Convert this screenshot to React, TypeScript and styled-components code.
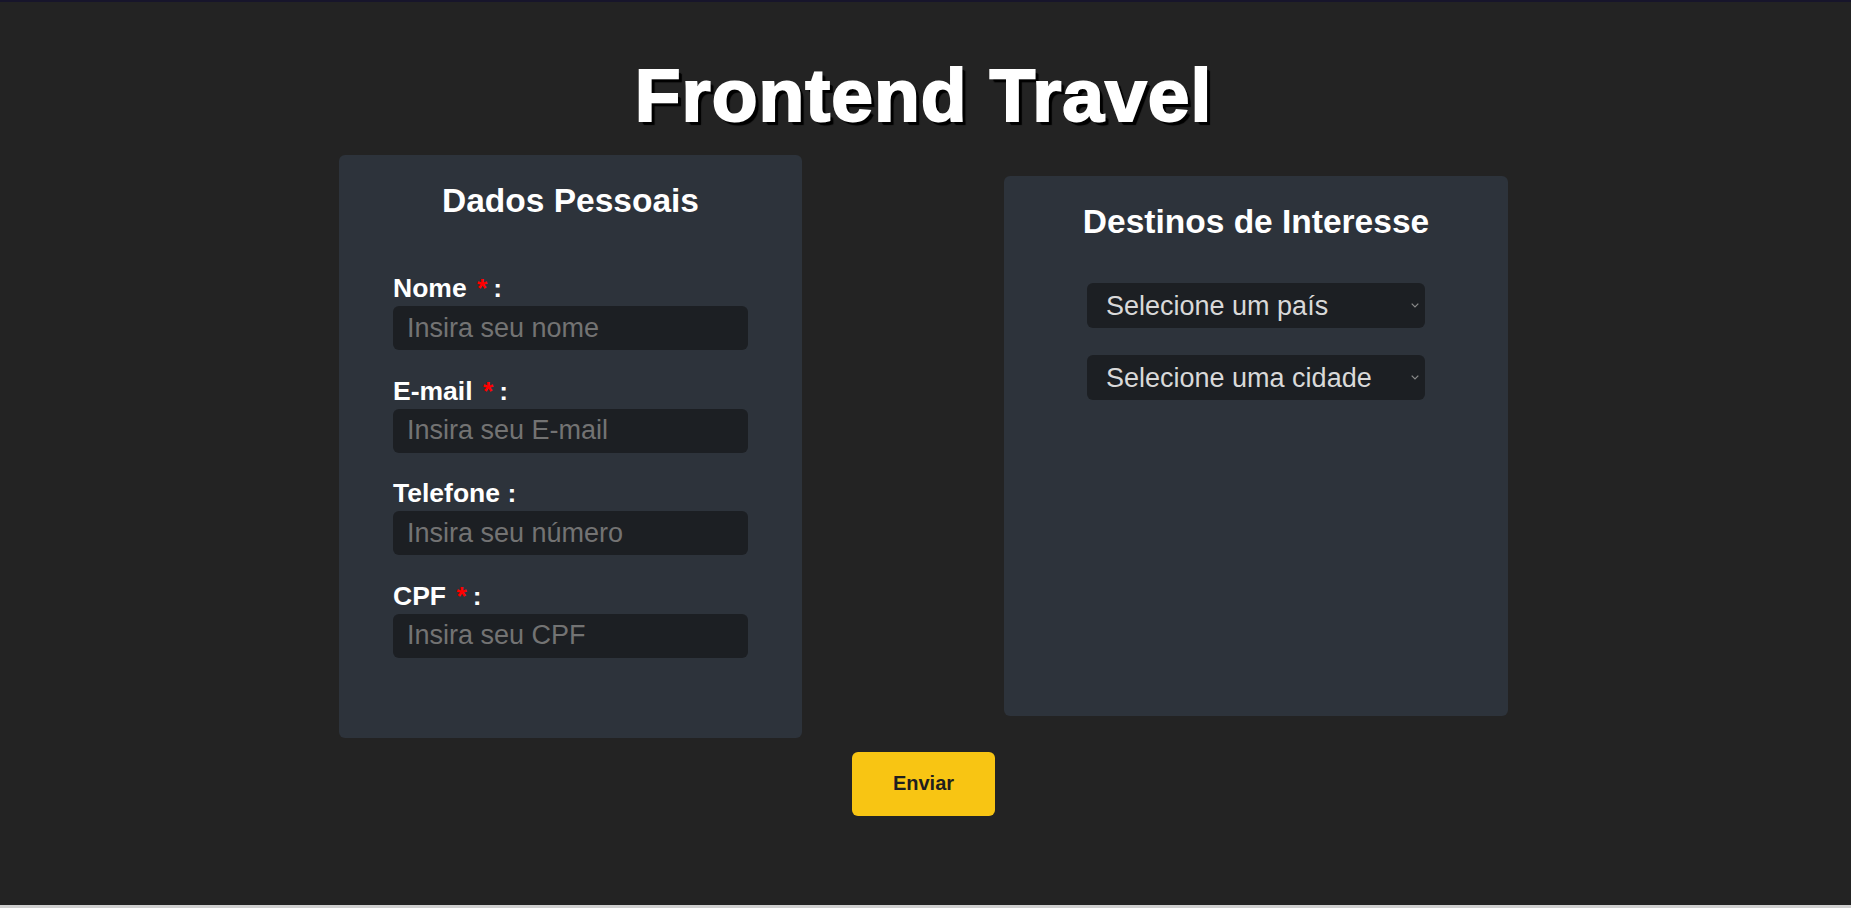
import React from "react";
import styled, { createGlobalStyle } from "styled-components";

const GlobalStyle = createGlobalStyle`
  html, body {
    margin: 0;
    padding: 0;
    background: #cfcfcf;
  }
  body {
    font-family: "Liberation Sans", Arial, Helvetica, sans-serif;
  }
  *, *::before, *::after {
    box-sizing: border-box;
  }
`;

const Page = styled.main`
  height: 905px;
  background: #232323;
  border-top: 2px solid #17152b;
  padding: 50px 4px 0 0;
  display: flex;
  flex-direction: column;
  align-items: center;
`;

const Title = styled.h1`
  margin: 0 0 17px;
  font-size: 75px;
  line-height: 86px;
  font-weight: 700;
  letter-spacing: 1px;
  color: #ffffff;
  -webkit-text-stroke: 2px #ffffff;
  text-shadow: 3px 3px 1px #000000, 4px 4px 1px #000000;
`;

const Row = styled.div`
  display: flex;
  align-items: center;
  gap: 202px;
`;

const Card = styled.section`
  background: #2d333b;
  border-radius: 6px;
  display: flex;
  flex-direction: column;
`;

const PersonalCard = styled(Card)`
  width: 463px;
  padding: 27px 54px 80px;
`;

const DestinationCard = styled(Card)`
  width: 504px;
  padding: 27px 0 316px;
  align-items: center;
`;

const CardTitle = styled.h2`
  margin: 0;
  font-size: 33.5px;
  line-height: 38px;
  font-weight: 700;
  color: #ffffff;
  text-align: center;
`;

const Fields = styled.div`
  margin-top: 53px;
  display: flex;
  flex-direction: column;
  gap: 25.5px;
`;

const Field = styled.div`
  display: flex;
  flex-direction: column;
  gap: 3px;
`;

const Label = styled.label`
  font-size: 26.5px;
  line-height: 30px;
  font-weight: 700;
  color: #ffffff;
`;

const Required = styled.span`
  color: #ff0000;
  margin: 0 6px 0 3px;
`;

const Input = styled.input`
  height: 44px;
  width: 100%;
  border: none;
  border-radius: 6px;
  background: #1c1f23;
  padding: 0 14px;
  font-family: inherit;
  font-size: 27px;
  color: #dddddd;
  outline: none;

  &::placeholder {
    color: #737373;
  }
`;

const Selects = styled.div`
  margin-top: 42px;
  width: 338px;
  display: flex;
  flex-direction: column;
  gap: 27px;
`;

const SelectWrap = styled.div`
  position: relative;
`;

const Select = styled.select`
  appearance: none;
  -webkit-appearance: none;
  width: 100%;
  height: 45px;
  border: none;
  border-radius: 6px;
  background: #1c1f23;
  color: #d9d9d9;
  padding: 0 19px;
  font-family: inherit;
  font-size: 27px;
  outline: none;
`;

const Chevron = styled.svg`
  position: absolute;
  right: 6px;
  top: 20px;
  width: 8px;
  height: 5px;
  pointer-events: none;
`;

const SubmitButton = styled.button`
  margin-top: 14px;
  width: 143px;
  height: 64px;
  border: none;
  border-radius: 6px;
  background: #f8c513;
  color: #1f1f1f;
  font-family: inherit;
  font-size: 20px;
  font-weight: 700;
  cursor: pointer;
`;

type FieldDef = { label: string; placeholder: string; required: boolean; type: string };

const fields: FieldDef[] = [
  { label: "Nome", placeholder: "Insira seu nome", required: true, type: "text" },
  { label: "E-mail", placeholder: "Insira seu E-mail", required: true, type: "email" },
  { label: "Telefone", placeholder: "Insira seu número", required: false, type: "tel" },
  { label: "CPF", placeholder: "Insira seu CPF", required: true, type: "text" },
];

const selects = ["Selecione um país", "Selecione uma cidade"];

export default function App() {
  return (
    <>
      <GlobalStyle />
      <Page>
        <Title>Frontend Travel</Title>
        <Row>
          <PersonalCard>
            <CardTitle>Dados Pessoais</CardTitle>
            <Fields>
              {fields.map((f) => (
                <Field key={f.label}>
                  <Label>
                    {f.label}{" "}
                    {f.required && <Required>*</Required>}
                    :
                  </Label>
                  <Input type={f.type} placeholder={f.placeholder} />
                </Field>
              ))}
            </Fields>
          </PersonalCard>
          <DestinationCard>
            <CardTitle>Destinos de Interesse</CardTitle>
            <Selects>
              {selects.map((s) => (
                <SelectWrap key={s}>
                  <Select defaultValue="">
                    <option value="">{s}</option>
                  </Select>
                  <Chevron viewBox="0 0 8 5" fill="none">
                    <path d="M0.7 0.7 L4 4 L7.3 0.7" stroke="#8a8a8a" strokeWidth="1.2" />
                  </Chevron>
                </SelectWrap>
              ))}
            </Selects>
          </DestinationCard>
        </Row>
        <SubmitButton type="button">Enviar</SubmitButton>
      </Page>
    </>
  );
}
